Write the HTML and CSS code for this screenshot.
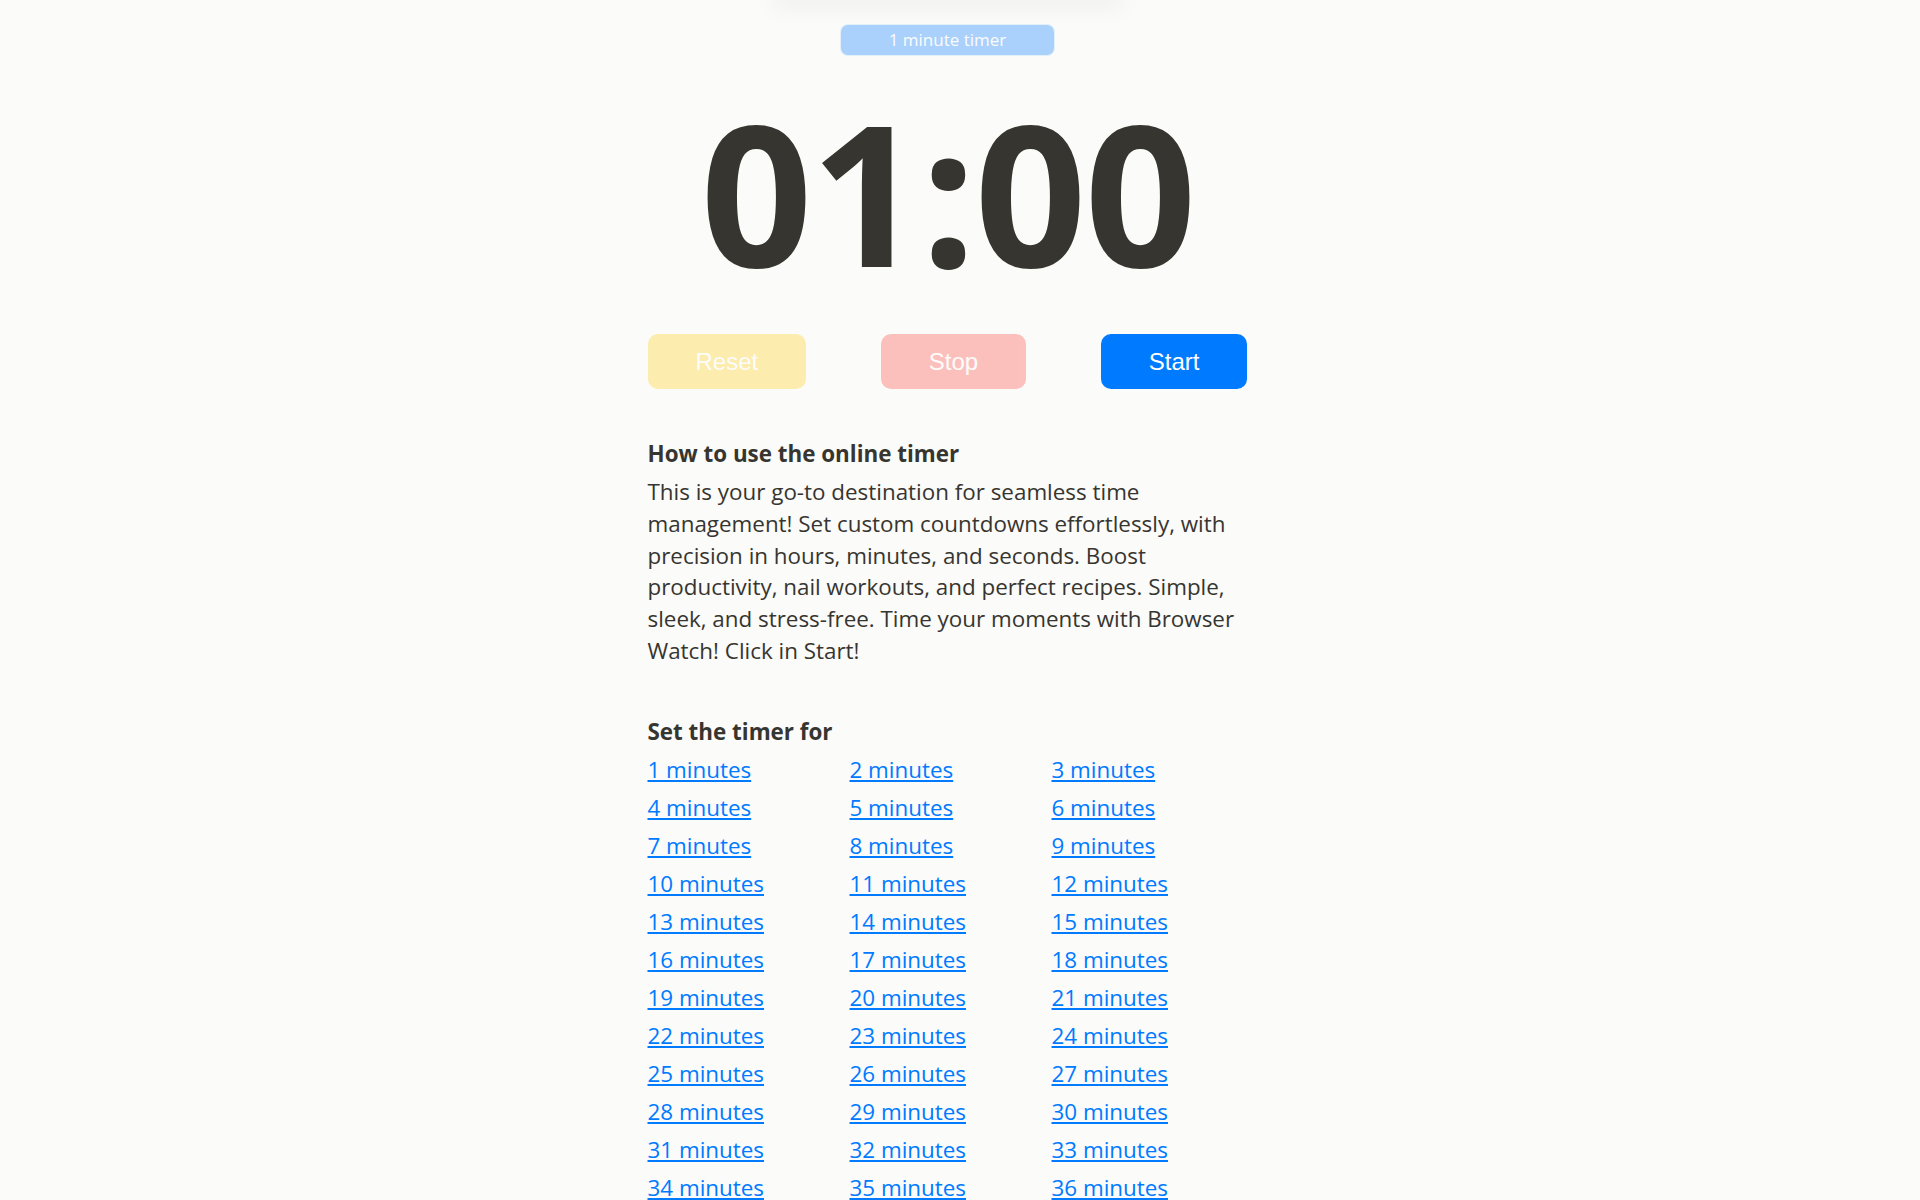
FILE: index.html
```html
<!DOCTYPE html>
<html>
<head>
  <meta charset="utf-8">
  <title>1 minute timer</title>
  <link rel="stylesheet" href="styles.css">
</head>
<body>
  <div class="top-shade"></div>

  <div class="page">
    <div class="badge-row">
      <span class="badge">1 minute timer</span>
    </div>

    <div id="clock" class="clock">01:00</div>

    <div class="controls">
      <button class="btn btn-reset" disabled>Reset</button>
      <button class="btn btn-stop" disabled>Stop</button>
      <button class="btn btn-start">Start</button>
    </div>

    <div class="section">
      <h3>How to use the online timer</h3>
      <p>This is your go-to destination for seamless time management! Set custom countdowns effortlessly, with precision in hours, minutes, and seconds. Boost productivity, nail workouts, and perfect recipes. Simple, sleek, and stress-free. Time your moments with Browser Watch! Click in Start!</p>
    </div>

    <div class="section">
      <h3>Set the timer for</h3>
      <div class="link-grid">
        <a href="#">1 minutes</a>
        <a href="#">2 minutes</a>
        <a href="#">3 minutes</a>
        <a href="#">4 minutes</a>
        <a href="#">5 minutes</a>
        <a href="#">6 minutes</a>
        <a href="#">7 minutes</a>
        <a href="#">8 minutes</a>
        <a href="#">9 minutes</a>
        <a href="#">10 minutes</a>
        <a href="#">11 minutes</a>
        <a href="#">12 minutes</a>
        <a href="#">13 minutes</a>
        <a href="#">14 minutes</a>
        <a href="#">15 minutes</a>
        <a href="#">16 minutes</a>
        <a href="#">17 minutes</a>
        <a href="#">18 minutes</a>
        <a href="#">19 minutes</a>
        <a href="#">20 minutes</a>
        <a href="#">21 minutes</a>
        <a href="#">22 minutes</a>
        <a href="#">23 minutes</a>
        <a href="#">24 minutes</a>
        <a href="#">25 minutes</a>
        <a href="#">26 minutes</a>
        <a href="#">27 minutes</a>
        <a href="#">28 minutes</a>
        <a href="#">29 minutes</a>
        <a href="#">30 minutes</a>
        <a href="#">31 minutes</a>
        <a href="#">32 minutes</a>
        <a href="#">33 minutes</a>
        <a href="#">34 minutes</a>
        <a href="#">35 minutes</a>
        <a href="#">36 minutes</a>
        <a href="#">37 minutes</a>
        <a href="#">38 minutes</a>
        <a href="#">39 minutes</a>
        <a href="#">40 minutes</a>
        <a href="#">41 minutes</a>
        <a href="#">42 minutes</a>
        <a href="#">43 minutes</a>
        <a href="#">44 minutes</a>
        <a href="#">45 minutes</a>
        <a href="#">46 minutes</a>
        <a href="#">47 minutes</a>
        <a href="#">48 minutes</a>
        <a href="#">49 minutes</a>
        <a href="#">50 minutes</a>
        <a href="#">51 minutes</a>
        <a href="#">52 minutes</a>
        <a href="#">53 minutes</a>
        <a href="#">54 minutes</a>
        <a href="#">55 minutes</a>
        <a href="#">56 minutes</a>
        <a href="#">57 minutes</a>
        <a href="#">58 minutes</a>
        <a href="#">59 minutes</a>
        <a href="#">60 minutes</a>
      </div>
    </div>

    <div class="section">
      <h3>Set the timer in hours</h3>
      <div class="link-grid">
        <a href="#">1 hours</a>
        <a href="#">2 hours</a>
        <a href="#">3 hours</a>
        <a href="#">4 hours</a>
        <a href="#">5 hours</a>
        <a href="#">6 hours</a>
        <a href="#">7 hours</a>
        <a href="#">8 hours</a>
        <a href="#">9 hours</a>
        <a href="#">10 hours</a>
        <a href="#">11 hours</a>
        <a href="#">12 hours</a>
      </div>
    </div>
  </div>
</body>
</html>
```

FILE: styles.css
```css
body {
  margin: 0;
  padding: 0 25px 0 0;
  font-family: "Open Sans", "Noto Sans", sans-serif;
  background: #fbfbfa;
  color: #37352f;
}

.top-shade {
  width: 340px;
  height: 0;
  margin: 0 auto;
  box-shadow: 0 0 22px 6px rgba(0, 0, 0, 0.07);
}

.page {
  width: 600px;
  margin: 0 auto;
  padding-bottom: 80px;
}

.badge-row {
  padding-top: 24px;
  text-align: center;
}

.badge {
  display: inline-block;
  padding: 5px 48px;
  font-size: 17px;
  line-height: 20px;
  color: white;
  background: #007aff;
  border: 1px solid rgba(255, 255, 255, 0.7);
  border-radius: 8px;
  opacity: 0.32;
}

.clock {
  margin-top: 37px;
  font-size: 196px;
  font-weight: 700;
  line-height: 1;
  text-align: center;
  letter-spacing: -2px;
}

.controls {
  display: flex;
  justify-content: space-between;
  margin-top: 45px;
}

.btn {
  padding: 14px 48px;
  border: none;
  border-radius: 10px;
  font-family: "Liberation Sans", Arial, sans-serif;
  font-size: 24px;
  line-height: 27px;
  color: white;
  cursor: pointer;
}

.btn:disabled {
  opacity: 0.3;
  cursor: default;
}

.btn-reset {
  background: #ffcc00;
}

.btn-stop {
  background: #ff3b30;
}

.btn-start {
  background: #007aff;
}

.section {
  margin-top: 49px;
}

.section h3 {
  margin: 0 0 6px;
  font-size: 22.4px;
  font-weight: 700;
  line-height: 32px;
}

.section p {
  margin: 0;
  font-size: 22.4px;
  line-height: 31.8px;
}

.link-grid {
  display: grid;
  grid-template-columns: repeat(3, 202px);
  row-gap: 6px;
  font-size: 22.4px;
  line-height: 32px;
}

.link-grid a {
  justify-self: start;
  color: #007aff;
  text-decoration: underline;
}
```
